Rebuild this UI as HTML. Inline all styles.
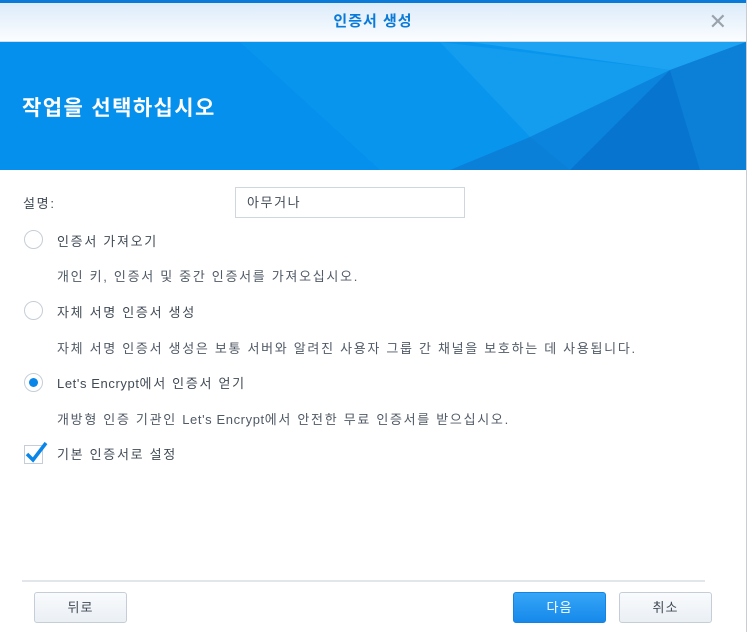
<!DOCTYPE html><html><head><meta charset="utf-8"><style>
body{margin:0;width:750px;height:632px;overflow:hidden;background:#fff;font-family:"Liberation Sans","Noto Sans CJK KR",sans-serif;position:relative}
.dlg{position:absolute;left:0;top:0;width:746px;height:632px;border-right:1px solid #c9ccd1;background:#fff}
.top{height:3px;background:#0a7ad8}
.tb{height:38px;background:linear-gradient(#dcebfa,#fbfdff);border-bottom:1px solid #d5dde6;text-align:center;line-height:38px;color:#0a7ad8;font-size:15px;font-weight:bold;position:relative;letter-spacing:1px}
.x{position:absolute;right:18px;top:0;color:#9aa3ad;font-size:22px;font-weight:normal}
.ban{height:128px;position:relative;overflow:hidden;background:#0690ee}
.ban h1{position:absolute;left:22px;top:50px;margin:0;color:#fff;font-size:21px;font-weight:bold;letter-spacing:1.4px}
.t{position:absolute;font-size:13px;color:#404a55;letter-spacing:1.7px;white-space:nowrap}
.t i{font-style:normal;letter-spacing:0.6px}
.d{color:#505a66}
.r{position:absolute;left:24px;width:19px;height:19px;border:1px solid #c5ced8;border-radius:50%;box-sizing:border-box;background:#fff}
.btn{position:absolute;top:592px;width:93px;height:31px;border:1px solid #c5ced8;border-radius:3px;box-sizing:border-box;background:linear-gradient(#f9fbfd,#eaeff4);text-align:center;line-height:29px;font-size:13px;color:#404a55;letter-spacing:1px}
</style></head><body>
<div class="dlg">
<div class="top"></div>
<div class="tb">인증서 생성<span class="x">✕</span></div>
<div class="ban">
<svg width="746" height="128" style="position:absolute;left:0;top:0">
<polygon points="240,0 746,0 746,128 380,128" fill="#0895ee"/>
<polygon points="470,0 746,0 670,28" fill="#27aaf2" opacity=".7"/>
<polygon points="440,0 670,28 530,95" fill="#1da2ef" opacity=".6"/>
<polygon points="530,95 670,28 600,128 470,128" fill="#0a84dc"/>
<polygon points="670,28 746,0 746,128 700,128" fill="#0c7fd6"/>
<polygon points="670,28 700,128 570,128" fill="#0774cf"/>
<polygon points="530,95 570,128 450,128" fill="#0a80d8"/>
</svg>
<h1>작업을 선택하십시오</h1></div>
<div class="t" style="left:23px;top:193px">설명<i>:</i></div>
<div style="position:absolute;left:235px;top:187px;width:230px;height:31px;border:1px solid #cfd6de;box-sizing:border-box;font-size:13px;color:#404a55;line-height:29px;padding-left:11px;letter-spacing:1.6px">아무거나</div>
<div class="r" style="top:230px"></div><div class="t" style="left:57px;top:231px">인증서 가져오기</div>
<div class="t d" style="left:57px;top:266px">개인 키, 인증서 및 중간 인증서를 가져오십시오.</div>
<div class="r" style="top:301px"></div><div class="t" style="left:57px;top:302px">자체 서명 인증서 생성</div>
<div class="t d" style="left:57px;top:338px">자체 서명 인증서 생성은 보통 서버와 알려진 사용자 그룹 간 채널을 보호하는 데 사용됩니다.</div>
<div class="r" style="top:373px"><div style="position:absolute;left:4px;top:4px;width:9px;height:9px;border-radius:50%;background:#0a86e8"></div></div><div class="t" style="left:57px;top:373px"><i>Let's Encrypt</i>에서 인증서 얻기</div>
<div class="t d" style="left:57px;top:409px">개방형 인증 기관인 <i>Let's Encrypt</i>에서 안전한 무료 인증서를 받으십시오.</div>
<div style="position:absolute;left:24px;top:445px;width:19px;height:19px;border:1px solid #c5ced8;box-sizing:border-box"></div>
<svg style="position:absolute;left:24px;top:440px" width="24" height="24"><path d="M3 14 L9 20 L22 3" stroke="#0a86e8" stroke-width="3.5" fill="none"/></svg>
<div class="t" style="left:57px;top:444px">기본 인증서로 설정</div>
<div style="position:absolute;left:22px;top:580px;width:683px;height:2px;background:#e2e6ea"></div>
<div class="btn" style="left:34px">뒤로</div>
<div class="btn" style="left:513px;background:linear-gradient(#36a6f7,#1689ea);border-color:#1783e0;color:#fff">다음</div>
<div class="btn" style="left:619px">취소</div>
</div>
</body></html>
